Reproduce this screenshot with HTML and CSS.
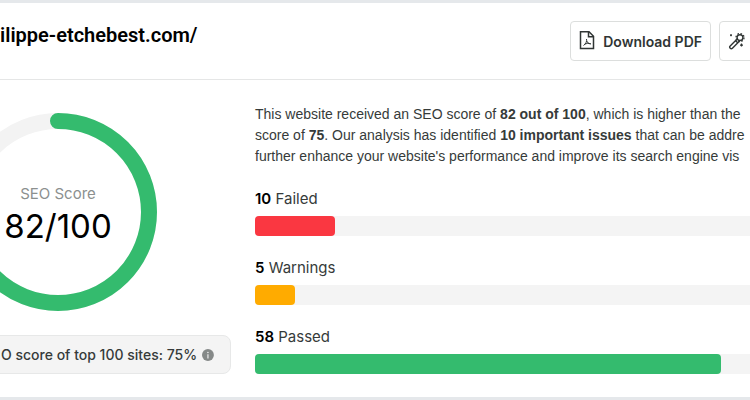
FILE: index.html
```
<!DOCTYPE html>
<html lang="en">

<head>
    <meta charset="UTF-8">
    <meta name="viewport" content="width=device-width, initial-scale=1.0">
    <title>SEO Report</title>
    <link rel="stylesheet" href="styles.css">
</head>

<body>

    <main class="report">

        <header class="report-header">
            <h1>ilippe-etchebest.com/</h1>
            <div class="actions">
                <button type="button" class="btn">
                    <svg class="icon-pdf" width="16" height="20" viewBox="0 0 16 20" fill="none" stroke="currentColor" stroke-width="1.5">
                        <path d="M1.5 0.8H10L14.5 5.3V17.5H1.5Z" />
                        <path d="M9.5 0.8V5.8H14.5" />
                        <path d="M7.5 8C8.2 10 6.8 12.9 4.5 14.5M7.7 9.8C8.4 11.7 9.6 12.7 12 12.9M5.8 13.2C7.6 12.3 9.4 12.2 11.5 12.8" stroke-width="1" />
                    </svg>
                    Download PDF
                </button>
                <button type="button" class="btn btn-magic" aria-label="Optimize">
                    <svg class="icon-wand" width="18" height="18" viewBox="0 0 18 18" fill="none" stroke="currentColor" stroke-width="1.4">
                        <path d="M9.4 6.8L2.2 14A1.5 1.5 0 0 0 4.4 16.2L11.6 9M7.6 8.7L9.7 10.8" />
                        <circle cx="12" cy="5.6" r="2.9" />
                        <circle cx="12" cy="5.6" r="4" stroke-width="1.3" stroke-dasharray="1.6 1.54" />
                        <path d="M3 2.2V4.2M2 3.2H4M13.5 11.6V14.6M12 13.1H15" stroke-width="1.2" />
                    </svg>
                </button>
            </div>
        </header>

        <div class="report-body">

            <section class="score">
                <div class="gauge">
                    <svg viewBox="0 0 198 198" fill="none" stroke-width="16">
                        <circle class="gauge-track" cx="99" cy="99" r="91" />
                        <circle class="gauge-value" cx="99" cy="99" r="91" pathLength="100" stroke-dasharray="82 100" transform="rotate(-90 99 99)" />
                    </svg>
                    <div class="gauge-text">
                        <span class="gauge-label">SEO Score</span>
                        <span class="gauge-number">82/100</span>
                    </div>
                </div>
                <div class="average">
                    <span>O score of top 100 sites: 75%</span>
                    <svg width="14" height="14" viewBox="0 0 14 14">
                        <circle cx="7" cy="7" r="7" fill="#858988" />
                        <path d="M7 6V11" stroke="#fff" stroke-width="1.2" />
                        <circle cx="7" cy="4" r="0.8" fill="#fff" />
                    </svg>
                </div>
            </section>

            <section class="results">
                <p class="summary">
                    This website received an SEO score of <b>82 out of 100</b>, which is higher than the<br>
                    score of <b>75</b>. Our analysis has identified <b>10 important issues</b> that can be addre<br>
                    further enhance your website's performance and improve its search engine vis
                </p>

                <div class="result">
                    <div class="result-label"><b>10</b> Failed</div>
                    <div class="bar"><div class="fill failed" style="width: 13.7%"></div></div>
                </div>
                <div class="result">
                    <div class="result-label"><b>5</b> Warnings</div>
                    <div class="bar"><div class="fill warnings" style="width: 6.8%"></div></div>
                </div>
                <div class="result">
                    <div class="result-label"><b>58</b> Passed</div>
                    <div class="bar"><div class="fill passed" style="width: 79.5%"></div></div>
                </div>
            </section>

        </div>
    </main>

</body>

</html>
```
FILE: styles.css
```
* {
    box-sizing: border-box;
}

body {
    margin: 0;
    padding-top: 3px;
    overflow: hidden;
    background: #e5e8eb;
    color: #363b3a;
    font-family: Inter, "Liberation Sans", sans-serif;
    font-size: 14px;
}

/* the report is wider than the window and runs off the right side */
.report {
    margin-right: -91px;
    background: #fff;
}

.report-header {
    display: flex;
    justify-content: space-between;
    padding: 18px 0;
    border-bottom: 1px solid #e5e6e6;
}

h1 {
    margin: 0;
    font-family: Roboto, sans-serif;
    font-size: 20px;
    line-height: 28px;
    font-weight: 600;
    color: #000;
}

.actions {
    display: flex;
    gap: 8px;
}

.btn {
    display: flex;
    align-items: center;
    gap: 8px;
    height: 40px;
    padding: 0 8px;
    border: 1px solid #dcdedd;
    border-radius: 4px;
    background: #fff;
    color: #303534;
    font-family: inherit;
    font-size: 14px;
    font-weight: 600;
    white-space: nowrap;
    cursor: pointer;
}

.btn-magic {
    width: 122px;
}

.report-body {
    display: flex;
    gap: 24px;
    padding: 24px 0 23px;
}

.score {
    display: flex;
    flex-direction: column;
    gap: 24px;
    flex: 0 0 231px;
    min-width: 0;
    padding-top: 9px;
}

.gauge {
    display: grid;
    width: 198px;
    height: 198px;
    margin-left: -41px;
}

.gauge svg,
.gauge-text {
    grid-area: 1 / 1;
}

.gauge-track {
    stroke: #f3f3f3;
}

.gauge-value {
    stroke: #34bb6e;
    stroke-linecap: round;
}

.gauge-text {
    display: flex;
    flex-direction: column;
    align-items: center;
    justify-content: center;
    padding-top: 4px;
}

.gauge-label {
    font-size: 15px;
    line-height: 24px;
    color: #8c908f;
}

.gauge-number {
    font-size: 33px;
    line-height: 40px;
    color: #000;
}

.average {
    display: flex;
    align-items: center;
    justify-content: flex-end;
    gap: 5px;
    height: 39px;
    margin-left: -16px;
    padding: 0 16px;
    border: 1px solid #e7e8e8;
    border-radius: 8px;
    background: #f4f4f4;
    font-weight: 500;
    white-space: nowrap;
}

.results {
    flex: 1;
    min-width: 0;
}

.summary {
    margin: 0 0 20px;
    font-family: "Liberation Sans", Arial, sans-serif;
    line-height: 21px;
    white-space: nowrap;
}

.result {
    margin-bottom: 20px;
}

.result:last-child {
    margin-bottom: 0;
}

.result-label {
    padding-bottom: 5px;
    font-size: 15px;
    line-height: 24px;
}

.result-label b {
    color: #000;
}

b {
    font-weight: 600;
}

.bar {
    height: 20px;
    border-radius: 4px;
    background: #f4f4f4;
}

.fill {
    height: 100%;
    border-radius: 4px;
}

.failed {
    background: #fa3741;
}

.warnings {
    background: #ffab00;
}

.passed {
    background: #34bb6e;
}
```
